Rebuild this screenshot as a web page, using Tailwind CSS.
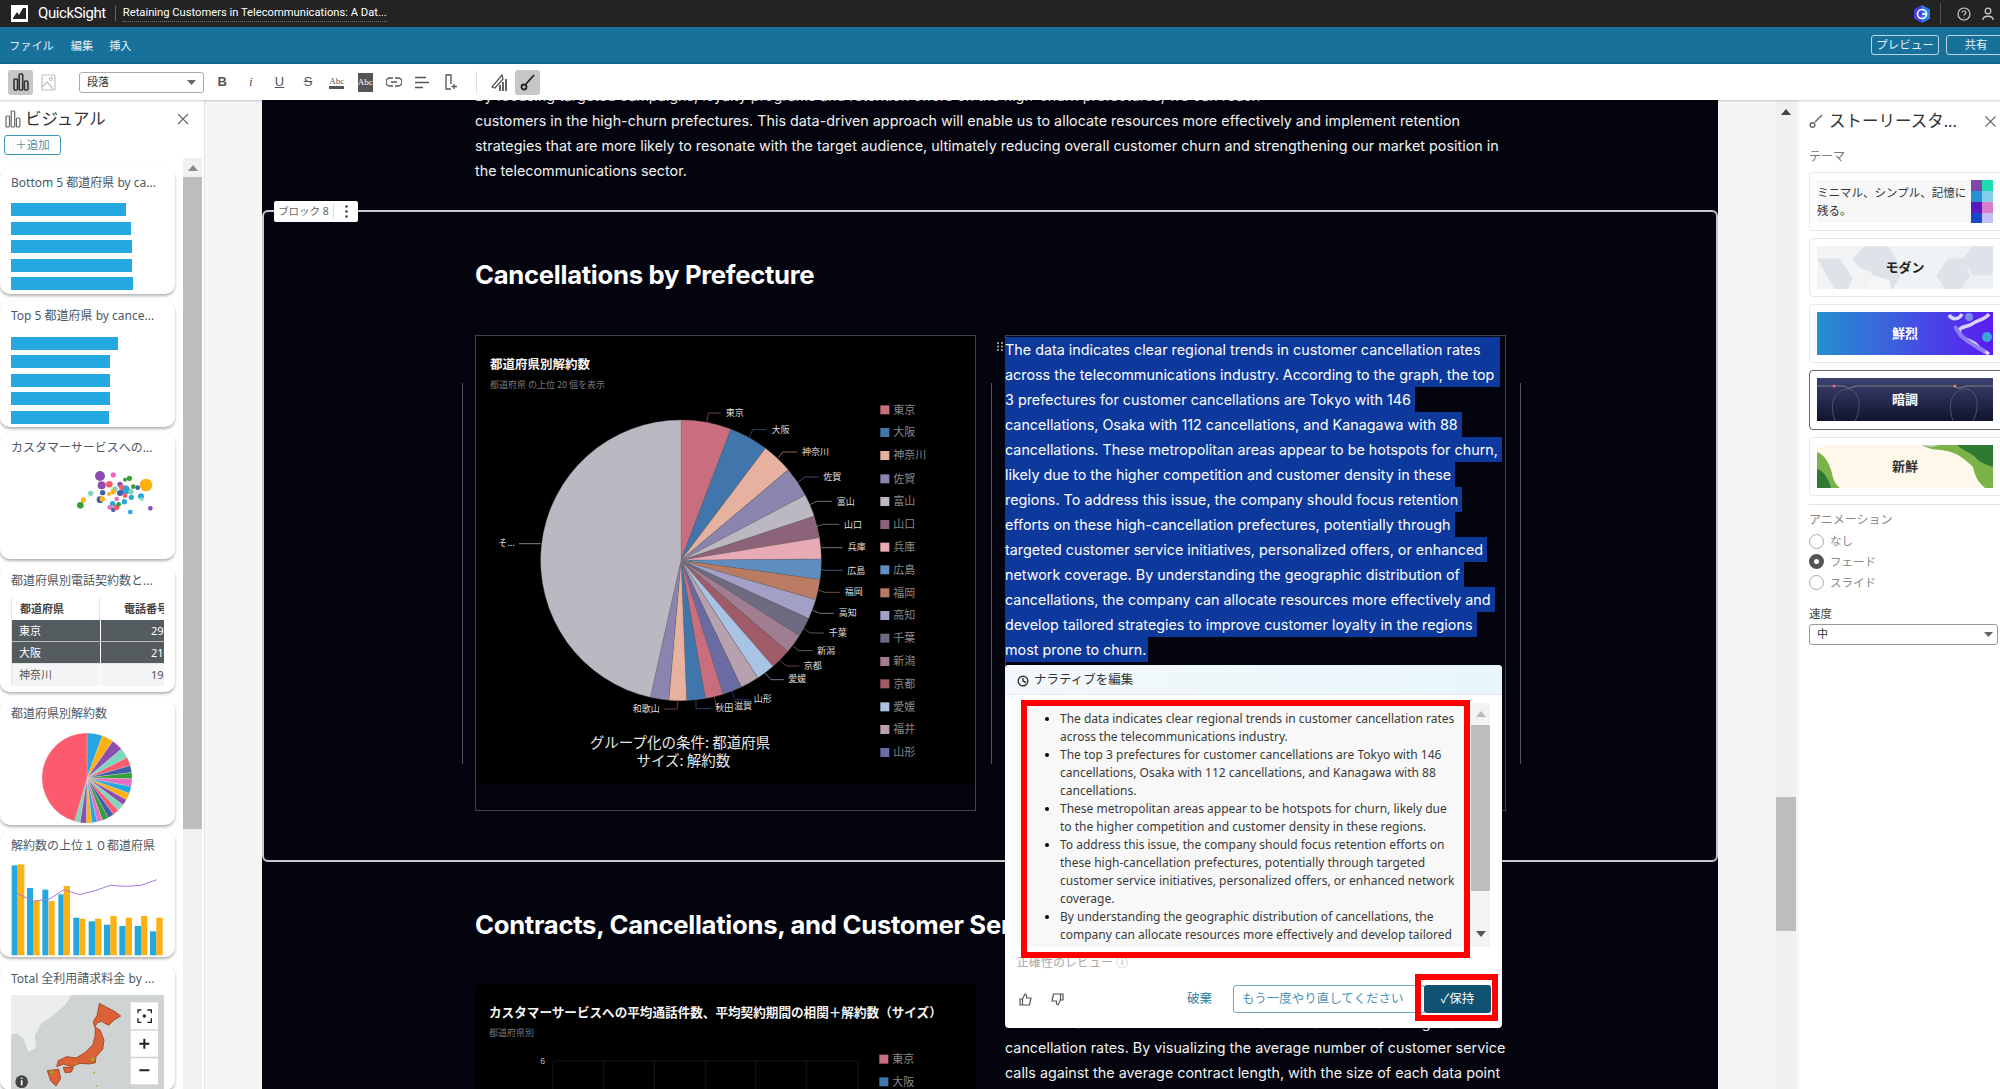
<!DOCTYPE html>
<html lang="ja">
<head>
  <meta charset="UTF-8" />
  <title>QuickSight</title>
  <script src="https://cdn.jsdelivr.net/npm/@tailwindcss/browser@4"></script>
</head>
<body class="m-0 font-['Noto_Sans','Noto_Sans_CJK_JP',sans-serif]">
<div class="w-[2000px] h-[1089px] overflow-hidden flex flex-col bg-[#f5f5f5]">

  <!-- top bar -->
  <header class="h-[27px] shrink-0 bg-[#232323] flex items-center text-white">
    <svg class="ml-[11px]" width="17" height="17" viewBox="0 0 17 17"><rect width="17" height="17" fill="#fff"/><path d="M2 13 L6 7 L8 10 L12 3 L15 3 L15 14 L2 14Z" fill="#232323"/></svg>
    <span class="ml-[10px] text-[15px] leading-none tracking-[-0.4px] font-['Roboto',sans-serif]">QuickSight</span>
    <span class="ml-[9px] w-px h-[15px] bg-[#666]"></span>
    <span class="ml-[7px] text-[11.2px] leading-[16px] border-b border-dotted border-[#777] font-['Roboto',sans-serif]">Retaining Customers in Telecommunications: A Dat...</span>
    <svg class="ml-auto" width="18" height="20" viewBox="0 0 18 20"><path d="M9 1 L17 5.5 V14.5 L9 19 L1 14.5 V5.5Z" fill="#4a3fe0"/><path d="M9 1 L17 5.5 V14.5 L9 19Z" fill="#2f7de8"/><circle cx="9" cy="10" r="4.5" fill="none" stroke="#fff" stroke-width="1.6"/><path d="M9 10 H13" stroke="#fff" stroke-width="1.6"/></svg>
    <span class="ml-[9px] w-px h-[21px] bg-[#555]"></span>
    <svg class="ml-[16px]" width="14" height="14" viewBox="0 0 14 14" fill="none" stroke="#c8c8c8" stroke-width="1.2"><circle cx="7" cy="7" r="6"/><path d="M5 5.5 C5 3.5 9 3.5 9 5.5 C9 7 7 7 7 8.5 M7 10 V10.8"/></svg>
    <svg class="ml-[10px] mr-[5px]" width="14" height="14" viewBox="0 0 14 14" fill="none" stroke="#c8c8c8" stroke-width="1.3"><circle cx="7" cy="4" r="2.8"/><path d="M2 13 C2 8 12 8 12 13"/></svg>
  </header>

  <!-- menu bar -->
  <nav class="h-[37px] shrink-0 bg-[#18719b] border-b-2 border-[#11648c] flex items-center text-white/90 text-[11.2px] pl-[9px] pt-[3px]">
    <span>ファイル</span>
    <span class="ml-[17px]">編集</span>
    <span class="ml-[16px]">挿入</span>
    <span class="ml-auto -mt-[2px] w-[68px] h-[20px] border border-white/70 rounded-[3px] flex items-center justify-center text-[11.5px]">プレビュー</span>
    <span class="ml-[7px] -mt-[2px] w-[60px] -mr-[6px] h-[20px] border border-white/70 rounded-[3px] flex items-center justify-center text-[11.5px]">共有</span>
  </nav>

  <!-- toolbar -->
  <div class="h-[36px] shrink-0 bg-white flex items-center pl-[8px] shadow-[0_1px_2px_rgba(0,0,0,0.2)] relative z-10 text-[#555]">
    <span class="w-[25px] h-[25px] rounded-[3px] bg-[#c6c6c6] flex items-center justify-center">
      <svg width="16" height="18" viewBox="0 0 16 18" fill="none" stroke="#333" stroke-width="1.6"><rect x="1" y="6" width="3.5" height="11" rx="1"/><rect x="6.2" y="1" width="3.5" height="16" rx="1"/><rect x="11.4" y="8" width="3.5" height="9" rx="1"/></svg>
    </span>
    <span class="w-[31px] flex justify-center">
      <svg width="15" height="17" viewBox="0 0 15 17" fill="none" stroke="#c0c0c0" stroke-width="1.2"><rect x="1" y="1" width="13" height="15" rx="1"/><circle cx="10" cy="5" r="1.5"/><path d="M1 13 L6 8 L12 15"/></svg>
    </span>
    <span class="ml-[15px] w-[125px] h-[21px] border border-[#aaa] rounded-[3px] flex items-center justify-between px-[7px] text-[11px] text-[#333]">段落<svg width="9" height="5" viewBox="0 0 9 5"><path d="M0 0 H9 L4.5 5Z" fill="#666"/></svg></span>
    <div class="ml-[4px] flex items-center">
      <span class="w-[28.6px] flex justify-center text-[13px] font-bold font-['Liberation_Sans',sans-serif]">B</span>
      <span class="w-[28.6px] flex justify-center text-[13px] italic font-['Liberation_Serif',serif]">i</span>
      <span class="w-[28.6px] flex justify-center text-[13px] underline font-['Liberation_Sans',sans-serif]">U</span>
      <span class="w-[28.6px] flex justify-center text-[13px] line-through font-['Liberation_Sans',sans-serif]">S</span>
      <span class="w-[28.6px] flex flex-col items-center text-[9px] leading-[10px] font-['Liberation_Serif',serif]">Abc<i class="block w-[15px] h-[3px] bg-[#555]"></i></span>
      <span class="w-[28.6px] flex justify-center"><i class="not-italic block w-[15px] h-[19px] bg-[#555] text-white text-[9px] leading-[19px] text-center font-['Liberation_Serif',serif]">Abc</i></span>
      <span class="w-[28.6px] flex justify-center">
        <svg width="16" height="10" viewBox="0 0 16 10" fill="none" stroke="#555" stroke-width="1.5"><path d="M7 1 H4 A4 4 0 0 0 4 9 H7 M9 1 H12 A4 4 0 0 1 12 9 H9 M5 5 H11"/></svg>
      </span>
      <span class="w-[28.6px] flex justify-center">
        <svg width="14" height="13" viewBox="0 0 14 13" stroke="#555" stroke-width="1.5"><path d="M0 1.5 H11 M0 6.5 H14 M0 11.5 H8"/></svg>
      </span>
      <span class="w-[28.6px] flex justify-center">
        <svg width="13" height="16" viewBox="0 0 13 16" fill="none" stroke="#555" stroke-width="1.3"><path d="M6 15 H1 V1 H6 V10 M9 10 V15 M6.5 12.5 H12"/></svg>
      </span>
    </div>
    <span class="ml-[11px] w-px h-[22px] bg-[#ddd]"></span>
    <span class="ml-[9px] w-[25px] flex justify-center">
      <svg width="16" height="17" viewBox="0 0 16 17" fill="none" stroke="#555" stroke-width="1.3"><path d="M1 13 L11 1 L12 5 L4 14Z"/><path d="M9 17 V11 M12 17 V8 M15 17 V5" stroke-width="1.8"/></svg>
    </span>
    <span class="ml-[4px] w-[25px] h-[25px] rounded-[3px] bg-[#c6c6c6] flex items-center justify-center">
      <svg width="15" height="17" viewBox="0 0 15 17" fill="none" stroke="#222" stroke-width="1.8"><path d="M14 1 L6 10"/><circle cx="4" cy="13" r="2.5"/></svg>
    </span>
  </div>

  <div class="flex flex-1 min-h-0">
    <!-- visuals panel -->
    <aside class="w-[205px] shrink-0 bg-white border-r border-[#e3e3e3] flex flex-col overflow-hidden">
      <div class="h-[35px] flex items-center pl-[5px] pr-[15px] pt-[3px]">
        <svg width="16" height="18" viewBox="0 0 16 18" fill="none" stroke="#666" stroke-width="1.2"><rect x="1" y="6" width="3.5" height="11" rx="1"/><rect x="6.2" y="1" width="3.5" height="16" rx="1"/><rect x="11.4" y="8" width="3.5" height="9" rx="1"/></svg>
        <span class="ml-[4px] text-[16.5px] text-[#333]">ビジュアル</span>
        <svg class="ml-auto" width="12" height="12" viewBox="0 0 12 12" stroke="#666" stroke-width="1.1"><path d="M1 1 L11 11 M11 1 L1 11"/></svg>
      </div>
      <div class="flex items-center pl-[4px] h-[20px]">
        <span class="w-[57px] h-[20px] border border-[#3e93b8] rounded-[3px] flex items-center justify-center text-[11.5px] text-[#5a8ea5]">＋追加</span>
      </div>
      <div class="flex flex-1 min-h-0 mt-[8px]">
        <div class="w-[175px] shrink-0 flex flex-col gap-[6.67px] pt-[5px]">

          <div class="h-[126px] shrink-0 rounded-[10px] bg-white shadow-[0_2px_3px_rgba(0,0,0,0.3)] px-[11px] pt-[7px] overflow-hidden">
            <div class="h-[16px] leading-[16px] text-[12px] text-[#4b5a66] whitespace-nowrap">Bottom 5 都道府県 by ca...</div>
            <div class="mt-[12px] flex flex-col gap-[5.5px]">
              <div class="h-[13px] w-[115px] bg-[#25a7df]"></div>
              <div class="h-[13px] w-[120px] bg-[#25a7df]"></div>
              <div class="h-[13px] w-[121px] bg-[#25a7df]"></div>
              <div class="h-[13px] w-[121px] bg-[#25a7df]"></div>
              <div class="h-[13px] w-[122px] bg-[#25a7df]"></div>
            </div>
          </div>

          <div class="h-[126px] shrink-0 rounded-[10px] bg-white shadow-[0_2px_3px_rgba(0,0,0,0.3)] px-[11px] pt-[7px] overflow-hidden">
            <div class="h-[16px] leading-[16px] text-[12px] text-[#4b5a66] whitespace-nowrap">Top 5 都道府県 by cance...</div>
            <div class="mt-[13px] flex flex-col gap-[5.5px]">
              <div class="h-[13px] w-[107px] bg-[#25a7df]"></div>
              <div class="h-[13px] w-[99px] bg-[#25a7df]"></div>
              <div class="h-[13px] w-[99px] bg-[#25a7df]"></div>
              <div class="h-[13px] w-[99px] bg-[#25a7df]"></div>
              <div class="h-[13px] w-[98px] bg-[#25a7df]"></div>
            </div>
          </div>

          <div class="relative h-[126px] shrink-0 rounded-[10px] bg-white shadow-[0_2px_3px_rgba(0,0,0,0.3)] px-[11px] pt-[7px] overflow-hidden">
            <div class="h-[16px] leading-[16px] text-[12px] text-[#4b5a66] whitespace-nowrap">カスタマーサービスへの...</div>
            <svg class="absolute left-0 top-0" width="175" height="126" viewBox="0 402 525 378">
              <g id="bubbles"></g>
            </svg>
          </div>

          <div class="h-[126px] shrink-0 rounded-[10px] bg-white shadow-[0_2px_3px_rgba(0,0,0,0.3)] pl-[11px] pt-[7px] overflow-hidden">
            <div class="h-[16px] leading-[16px] text-[12px] text-[#4b5a66] whitespace-nowrap">都道府県別電話契約数と...</div>
            <div class="mt-[9px] w-[153px] overflow-hidden text-[11px]">
              <div class="w-[190px] grid grid-cols-[88px_102px] border-l border-[#e5e5e5]">
                <div class="h-[22px] leading-[22px] pl-[8px] font-bold text-[#444] border-r border-[#e5e5e5]">都道府県</div>
                <div class="h-[22px] leading-[22px] pl-[24px] font-bold text-[#444]">電話番号数</div>
                <div class="h-[21px] leading-[21px] pl-[7px] bg-[#555c60] text-white">東京</div>
                <div class="h-[21px] leading-[21px] pl-[50px] ml-px bg-[#555c60] text-white">2910</div>
                <div class="col-span-2 h-px bg-[#bbb]"></div>
                <div class="h-[21px] leading-[21px] pl-[7px] bg-[#555c60] text-white">大阪</div>
                <div class="h-[21px] leading-[21px] pl-[50px] ml-px bg-[#555c60] text-white">2100</div>
                <div class="col-span-2 h-px bg-[#e5e5e5]"></div>
                <div class="h-[22px] leading-[22px] pl-[7px] bg-[#f3f5f6] text-[#555]">神奈川</div>
                <div class="h-[22px] leading-[22px] pl-[50px] ml-px bg-[#f3f5f6] text-[#555]">1930</div>
              </div>
            </div>
          </div>

          <div class="relative h-[126px] shrink-0 rounded-[10px] bg-white shadow-[0_2px_3px_rgba(0,0,0,0.3)] px-[11px] pt-[7px] overflow-hidden">
            <div class="h-[16px] leading-[16px] text-[12px] text-[#4b5a66] whitespace-nowrap">都道府県別解約数</div>
            <svg class="absolute left-0 top-0" width="175" height="126"><g id="miniPie"></g></svg>
          </div>

          <div class="relative h-[126px] shrink-0 rounded-[10px] bg-white shadow-[0_2px_3px_rgba(0,0,0,0.3)] px-[11px] pt-[7px] overflow-hidden">
            <div class="h-[16px] leading-[16px] text-[12px] text-[#4b5a66] whitespace-nowrap">解約数の上位１０都道府県</div>
            <svg class="absolute left-0 top-0" width="175" height="126" viewBox="0 422 525 378">
              <g fill="#25a7df">
                <rect x="35" y="525" width="18" height="270"/><rect x="81" y="593" width="18" height="202"/><rect x="127" y="598" width="18" height="197"/><rect x="175" y="612" width="16" height="183"/><rect x="220" y="682" width="18" height="113"/><rect x="266" y="693" width="19" height="102"/><rect x="312" y="703" width="19" height="92"/><rect x="358" y="707" width="19" height="88"/><rect x="404" y="707" width="19" height="88"/><rect x="450" y="723" width="19" height="72"/>
              </g>
              <g fill="#ffb114">
                <rect x="53" y="522" width="20" height="273"/><rect x="99" y="632" width="20" height="163"/><rect x="146" y="632" width="18" height="163"/><rect x="191" y="587" width="19" height="208"/><rect x="238" y="685" width="18" height="110"/><rect x="285" y="685" width="19" height="110"/><rect x="331" y="677" width="19" height="118"/><rect x="377" y="682" width="19" height="113"/><rect x="423" y="677" width="19" height="118"/><rect x="469" y="682" width="19" height="113"/>
              </g>
              <path d="M53 610 L100 632 L147 627 L192 598 L238 613 L285 601 L331 585 L377 588 L423 585 L470 568" fill="none" stroke="#a778d8" stroke-width="3"/>
            </svg>
          </div>

          <div class="h-[126px] shrink-0 rounded-[10px] bg-white shadow-[0_2px_3px_rgba(0,0,0,0.3)] px-[11px] pt-[7px] overflow-hidden">
            <div class="h-[16px] leading-[16px] text-[12px] text-[#4b5a66] whitespace-nowrap">Total 全利用請求料金 by ...</div>
            <svg class="mt-[8px] block" width="153" height="94" viewBox="33 915 459 282">
              <rect x="33" y="915" width="459" height="282" fill="#cfd3d3"/>
              <path d="M33 915 H215 L195 945 L160 975 L125 1000 L105 1035 L108 1075 L85 1085 L70 1045 L50 1030 L33 1035Z" fill="#eceded"/>
              <g fill="#db6236" stroke="#a34c2b" stroke-width="3" stroke-linejoin="round">
                <path d="M298 940 L320 952 L345 965 L362 978 L342 990 L326 1006 L305 994 L292 998 L284 1012 L280 995 L292 975Z"/>
                <path d="M286 1012 L300 1020 L312 1050 L308 1078 L288 1100 L286 1118 L268 1122 L240 1120 L215 1130 L190 1122 L170 1130 L175 1112 L200 1100 L228 1104 L255 1088 L278 1065 L285 1040Z"/>
                <path d="M142 1142 L176 1138 L182 1165 L168 1188 L152 1172Z"/>
                <path d="M190 1132 L220 1132 L214 1146 L195 1148Z"/>
              </g>
              <g fill="#8fae2c">
                <circle cx="278" cy="1108" r="6"/><circle cx="155" cy="1146" r="5"/><circle cx="228" cy="1122" r="3"/><circle cx="283" cy="1148" r="2.5"/><circle cx="290" cy="1188" r="2.5"/>
              </g>
              <g fill="#fff">
                <rect x="392" y="937" width="82" height="81"/><rect x="392" y="1022" width="82" height="78"/><rect x="392" y="1105" width="82" height="78"/>
              </g>
              <path d="M414 970 V960 H424 M442 960 H454 V970 M454 985 V997 H442 M424 997 H414 V985" fill="none" stroke="#222" stroke-width="4"/>
              <circle cx="433" cy="978" r="5" fill="#222"/>
              <path d="M418 1061 H448 M433 1046 V1076 M418 1141 H448" stroke="#222" stroke-width="6"/>
              <circle cx="65" cy="1175" r="19" fill="#444"/>
              <path d="M65 1171 V1186 M65 1163 V1167" stroke="#fff" stroke-width="5"/>
            </svg>
          </div>
        </div>
        <div class="ml-[8px] w-[19px] bg-[#f1f1f1] flex flex-col items-center -mt-[5px]">
          <svg class="mt-[7px]" width="10" height="6" viewBox="0 0 10 6"><path d="M0 6 H10 L5 0Z" fill="#888"/></svg>
          <div class="mt-[6px] w-[19px] h-[652px] bg-[#bdbdbd]"></div>
        </div>
      </div>
    </aside>

    <div class="w-[57px] shrink-0"></div>

    <!-- story canvas -->
    <main class="relative w-[1456px] shrink-0 bg-[#03040e] overflow-hidden text-white font-['Inter',sans-serif]">
      <div class="-mt-[17px] pl-[213px] text-[14.35px] leading-[25px] whitespace-nowrap text-[#f1f1f1]">
        <div>By focusing targeted campaigns, loyalty programs and retention offers on the high-churn prefectures, we can reach</div>
        <div>customers in the high-churn prefectures. This data-driven approach will enable us to allocate resources more effectively and implement retention</div>
        <div>strategies that are more likely to resonate with the target audience, ultimately reducing overall customer churn and strengthening our market position in</div>
        <div>the telecommunications sector.</div>
      </div>

      <section class="relative mt-[27px] h-[652px] border-2 border-[#c9c9c9] rounded-[6px]">
        <div class="absolute -top-[11px] left-[10px] h-[21px] w-[84px] bg-white rounded-[2px] flex items-center text-[10.5px] text-[#666] font-['Noto_Sans','Noto_Sans_CJK_JP',sans-serif]">
          <span class="w-[60px] text-center border-r border-[#ddd]">ブロック 8</span>
          <svg class="mx-auto" width="3" height="13" viewBox="0 0 3 13" fill="#444"><circle cx="1.5" cy="1.5" r="1.3"/><circle cx="1.5" cy="6.5" r="1.3"/><circle cx="1.5" cy="11.5" r="1.3"/></svg>
        </div>
        <h2 class="mt-[45px] pl-[211px] h-[36px] leading-[36px] text-[25.7px] font-bold tracking-[-0.3px] text-white">Cancellations by Prefecture</h2>
        <div class="mt-[42px] pl-[211px] flex gap-[29px]">
          <div class="w-[501px] h-[476px] border border-[#3f424d]">
            <svg width="499" height="448" viewBox="18 17 1497 1344" class="bg-black block font-['Noto_Sans_CJK_JP',sans-serif]">
              <text x="60" y="115" font-size="37.5" font-weight="700" fill="#f5f5f5">都道府県別解約数</text>
              <text x="60" y="172" font-size="27" fill="#777">都道府県 の上位 20 個を表示</text>
              <g id="bigPie"></g>
              <g id="leaders" fill="none" stroke-width="2.5"></g>
              <g id="labels" font-size="27" fill="#dedede"></g>
              <g id="legend" font-size="33" fill="#888"></g>
              <text x="630" y="1253" font-size="43.5" fill="#e8e8e8" text-anchor="middle">グループ化の条件: 都道府県</text>
              <text x="640" y="1306" font-size="43.5" fill="#e8e8e8" text-anchor="middle">サイズ: 解約数</text>
            </svg>
          </div>
          <div class="relative w-[501px] h-[476px] border border-[#3f424d] pt-px text-[14.35px] whitespace-nowrap leading-[25px]">
            <div class="-ml-px flex flex-col items-start">
              <span class="block bg-[#0d389c] pr-[19px]">The data indicates clear regional trends in customer cancellation rates</span>
              <span class="block bg-[#0d389c] pr-[6px]">across the telecommunications industry. According to the graph, the top</span>
              <span class="block bg-[#0d389c] pr-[4px]">3 prefectures for customer cancellations are Tokyo with 146</span>
              <span class="block bg-[#0d389c] pr-[4px]">cancellations, Osaka with 112 cancellations, and Kanagawa with 88</span>
              <span class="block bg-[#0d389c] pr-[4px]">cancellations. These metropolitan areas appear to be hotspots for churn,</span>
              <span class="block bg-[#0d389c] pr-[4px]">likely due to the higher competition and customer density in these</span>
              <span class="block bg-[#0d389c] pr-[4px]">regions. To address this issue, the company should focus retention</span>
              <span class="block bg-[#0d389c] pr-[4px]">efforts on these high-cancellation prefectures, potentially through</span>
              <span class="block bg-[#0d389c] pr-[4px]">targeted customer service initiatives, personalized offers, or enhanced</span>
              <span class="block bg-[#0d389c] pr-[4px]">network coverage. By understanding the geographic distribution of</span>
              <span class="block bg-[#0d389c] pr-[4px]">cancellations, the company can allocate resources more effectively and</span>
              <span class="block bg-[#0d389c] pr-[4px]">develop tailored strategies to improve customer loyalty in the regions</span>
              <span class="block bg-[#0d389c] pr-[2px]">most prone to churn.</span>
            </div>
          </div>
        </div>
        <!-- resize handles -->
        <div class="absolute left-[198px] top-[171px] w-px h-[381px] bg-[#555]"></div>
        <div class="absolute left-[727px] top-[171px] w-px h-[381px] bg-[#555]"></div>
        <div class="absolute left-[1256px] top-[171px] w-px h-[381px] bg-[#555]"></div>
        <svg class="absolute left-[733px] top-[130px]" width="6" height="9" viewBox="0 0 6 9" fill="#bbb"><circle cx="1" cy="1" r="1"/><circle cx="5" cy="1" r="1"/><circle cx="1" cy="4.5" r="1"/><circle cx="5" cy="4.5" r="1"/><circle cx="1" cy="8" r="1"/><circle cx="5" cy="8" r="1"/></svg>
      </section>

      <h2 class="mt-[45px] pl-[213px] h-[36px] leading-[36px] text-[25.7px] font-bold tracking-[-0.3px] text-white whitespace-nowrap">Contracts, Cancellations, and Customer Service Interactions</h2>
      <div class="mt-[42px] pl-[213px] flex gap-[29px]">
        <svg width="501" height="129" viewBox="18 75 1503 387" class="bg-black block shrink-0 font-['Noto_Sans_CJK_JP',sans-serif]">
          <text x="60" y="171" font-size="37.8" font-weight="700" fill="#f5f5f5">カスタマーサービスへの平均通話件数、平均契約期間の相関＋解約数（サイズ）</text>
          <text x="60" y="228" font-size="27" fill="#777">都道府県別</text>
          <text x="214" y="312" font-size="26" fill="#bbb" font-family="Liberation Sans">6</text>
          <path d="M252 303 H1167 V462 M252 303 V462 M403 303 V462 M556 303 V462 M709 303 V462 M860 303 V462 M1013 303 V462" fill="none" stroke="#222" stroke-width="2"/>
          <rect x="1231" y="284" width="27" height="27" fill="#c96e7e"/>
          <text x="1270" y="309" font-size="33" fill="#888">東京</text>
          <rect x="1231" y="352" width="27" height="27" fill="#4076ac"/>
          <text x="1270" y="377" font-size="33" fill="#888">大阪</text>
        </svg>
        <div class="w-[501px] text-[14.35px] leading-[25px] whitespace-nowrap text-[#f1f1f1] mt-[25px]">
          <div>The correlation between service interactions and contract length and</div>
          <div>cancellation rates. By visualizing the average number of customer service</div>
          <div>calls against the average contract length, with the size of each data point</div>
        </div>
      </div>

      <!-- narrative dialog -->
      <div class="absolute left-[743px] top-[565px] w-[497px] h-[363px] bg-white rounded-[4px] text-[#333] font-['Noto_Sans','Noto_Sans_CJK_JP',sans-serif]">
        <div class="h-[30px] pt-[2px] rounded-t-[4px] bg-gradient-to-r from-[#f3f8fa] to-[#e8f6fb] border-b border-[#e3e8ea] flex items-center pl-[12px] text-[12.5px]">
          <svg width="12" height="12" viewBox="0 0 12 12" fill="none" stroke="#333" stroke-width="1.4"><circle cx="6" cy="6" r="4.8"/><path d="M6 3 V6 L9 7.5"/></svg>
          <span class="ml-[5px]">ナラティブを編集</span>
        </div>
        <div class="ml-[12px] mt-[8px] w-[473px] h-[244px] bg-[#f8f8f8] flex overflow-hidden">
          <ul class="w-[454px] pl-[43px] pt-[7px] text-[12px] leading-[18px] list-disc whitespace-nowrap text-[#3a3a3a] marker:text-black">
            <li>The data indicates clear regional trends in customer cancellation rates<br>across the telecommunications industry.</li>
            <li>The top 3 prefectures for customer cancellations are Tokyo with 146<br>cancellations, Osaka with 112 cancellations, and Kanagawa with 88<br>cancellations.</li>
            <li>These metropolitan areas appear to be hotspots for churn, likely due<br>to the higher competition and customer density in these regions.</li>
            <li>To address this issue, the company should focus retention efforts on<br>these high-cancellation prefectures, potentially through targeted<br>customer service initiatives, personalized offers, or enhanced network<br>coverage.</li>
            <li>By understanding the geographic distribution of cancellations, the<br>company can allocate resources more effectively and develop tailored</li>
          </ul>
          <div class="w-[19px] bg-[#f3f3f3] flex flex-col items-center">
            <svg class="mt-[8px]" width="10" height="6" viewBox="0 0 10 6"><path d="M0 6 H10 L5 0Z" fill="#bbb"/></svg>
            <div class="mt-[8px] w-[19px] h-[166px] bg-[#bdbdbd]"></div>
            <svg class="mt-auto mb-[10px]" width="10" height="6" viewBox="0 0 10 6"><path d="M0 0 H10 L5 6Z" fill="#555"/></svg>
          </div>
        </div>
        <div class="ml-[12px] mt-[8px] h-[16px] leading-[16px] text-[12px] text-[#a9a9a9]">正確性のレビュー ⓘ</div>
        <div class="mt-[14px] flex items-center h-[28px] pl-[14px] whitespace-nowrap">
          <svg class="shrink-0" width="13" height="13" viewBox="0 0 13 13" fill="none" stroke="#555" stroke-width="1.2"><path d="M1 6 H3.5 V12 H1Z M3.5 6 L6 1 C7.5 1 7.8 2.5 7.5 5 H12 L10.5 12 H3.5"/></svg>
          <svg class="shrink-0 ml-[19px]" width="13" height="13" viewBox="0 0 13 13" fill="none" stroke="#555" stroke-width="1.2"><path d="M12 7 H9.5 V1 H12Z M9.5 7 L7 12 C5.5 12 5.2 10.5 5.5 8 H1 L2.5 1 H9.5"/></svg>
          <span class="ml-[123px] w-[25px] shrink-0 text-[12.5px] text-[#2a80a8]">破棄</span>
          <span class="ml-[21px] w-[192px] shrink-0 h-[28px] border border-[#6fa9c4] rounded-[3px] pl-[8px] leading-[26px] text-[12.5px] text-[#4a94b8]">もう一度やり直してください</span>
          <span class="-ml-px w-[67px] shrink-0 h-[28px] rounded-[3px] bg-[#0f5272] text-white text-[12.5px] flex items-center justify-center relative">✓保持</span>
        </div>
        <!-- red callouts -->
        <div class="absolute left-[16px] top-[35px] w-[449px] h-[258px] border-[6px] border-[#ff0000]"></div>
        <div class="absolute left-[410px] top-[309px] w-[83px] h-[47px] border-[6px] border-[#ff0000]"></div>
      </div>
    </main>

    <div class="w-[58px] shrink-0"></div>
    <div class="w-[20px] shrink-0 bg-[#f0f0f0] flex flex-col items-center">
      <svg class="mt-[9px]" width="10" height="6" viewBox="0 0 10 6"><path d="M0 6 H10 L5 0Z" fill="#444"/></svg>
      <div class="mt-[682px] w-[20px] h-[134px] bg-[#bdbdbd]"></div>
    </div>
    <div class="w-[3px] shrink-0"></div>

    <!-- story style panel -->
    <aside class="flex-1 bg-white pl-[10px] text-[#555] overflow-hidden">
      <div class="h-[40px] flex items-center pr-[4px] pt-[2px] whitespace-nowrap">
        <svg width="14" height="15" viewBox="0 0 14 15" fill="none" stroke="#666" stroke-width="1.5"><path d="M13 1 L6 8"/><circle cx="3.5" cy="11" r="2.3"/></svg>
        <span class="ml-[6px] text-[16.5px] text-[#333] leading-none">ストーリースタ...</span>
        <svg class="ml-auto" width="11" height="11" viewBox="0 0 11 11" stroke="#666" stroke-width="1.1"><path d="M0.5 0.5 L10.5 10.5 M10.5 0.5 L0.5 10.5"/></svg>
      </div>
      <div class="mt-[7px] h-[20px] leading-[20px] text-[12px] text-[#777]">テーマ</div>
      <div class="mt-[5px] flex flex-col gap-[7px] -mr-[8px]">
        <div class="h-[59px] border border-[#e9e9e9] rounded-[4px] p-[7px]">
          <div class="h-[43px] w-[176px] bg-[#f7f7f7] flex items-center justify-between">
            <span class="text-[11.5px] leading-[18px] text-[#333]">ミニマル、シンプル、記憶に<br>残る。</span>
            <div class="w-[22px] grid grid-cols-2 shrink-0">
              <i class="h-[11px] bg-[#7e4aa8]"></i><i class="h-[11px] bg-[#1ddcae]"></i>
              <i class="h-[11px] bg-[#2590d4]"></i><i class="h-[11px] bg-[#84cfee]"></i>
              <i class="h-[11px] bg-[#5b18c0]"></i><i class="h-[11px] bg-[#d97ccb]"></i>
              <i class="h-[10px] bg-[#1849c8]"></i><i class="h-[10px] bg-[#c3c0f8]"></i>
            </div>
          </div>
        </div>
        <div class="h-[59px] border border-[#e9e9e9] rounded-[4px] p-[7px]">
          <div class="relative h-[43px] w-[176px]">
            <svg width="176" height="43" viewBox="953 738 526 128"><defs><linearGradient id="mg" x1="0" x2="1"><stop offset="0" stop-color="#f2f4f6"/><stop offset="1" stop-color="#eef1f3"/></linearGradient></defs><rect x="953" y="738" width="526" height="128" fill="url(#mg)"/><g fill="#dde3e8"><path d="M953 775 H1020 L1060 835 L1045 866 H1005Z"/><path d="M1095 738 H1165 L1210 810 L1180 866 H1140 L1115 815 L1075 800 L1060 775Z"/><path d="M1095 866 L1120 825 L1170 840 L1175 866Z" fill="#f4f6f8"/><path d="M1310 825 L1345 775 L1390 775 L1410 825 L1385 866 H1335Z"/><path d="M1385 780 L1420 738 H1478 V825 H1420Z"/></g></svg>
            <div class="absolute inset-0 flex items-center justify-center text-[13px] font-bold text-[#222]">モダン</div>
          </div>
        </div>
        <div class="h-[59px] border border-[#e9e9e9] rounded-[4px] p-[7px]">
          <div class="relative h-[43px] w-[176px]">
            <svg width="176" height="43" viewBox="0 0 176 43"><defs><linearGradient id="vg" x1="0" x2="1"><stop offset="0" stop-color="#2591cf"/><stop offset="1" stop-color="#5a1cf2"/></linearGradient></defs><rect width="176" height="43" fill="url(#vg)"/><path d="M132 3 C135 8 142 8 145 2 M172 2 C168 8 160 8 155 12 C148 16 140 14 143 22 C146 30 156 26 162 36 L172 42" fill="none" stroke="#d9d2fb" stroke-width="3.5"/><circle cx="152" cy="5" r="4" fill="#7d89e8"/><circle cx="170" cy="25" r="5" fill="#3aa5da"/><path d="M138 14 C144 28 156 32 168 40" fill="none" stroke="#8e7cf3" stroke-width="4"/></svg>
            <div class="absolute inset-0 flex items-center justify-center text-[13px] font-bold text-white">鮮烈</div>
          </div>
        </div>
        <div class="h-[60px] border-[1.5px] border-[#666] rounded-[4px] p-[7px]">
          <div class="relative h-[43px] w-[176px]">
            <svg width="176" height="43" viewBox="0 0 176 43"><defs><linearGradient id="dg" x1="0" x2="0" y1="0" y2="1"><stop offset="0" stop-color="#3c416d"/><stop offset="1" stop-color="#11142f"/></linearGradient></defs><rect width="176" height="43" fill="url(#dg)"/><path d="M0 8 H26 C30 8 30 11 33 10 C36 9 38 8 42 8 H135 C138 8 140 11 143 10 C146 9 148 8 152 8 H176" fill="none" stroke="#8a7f8c" stroke-width="1"/><path d="M18 43 C10 20 22 11 30 11 C42 11 46 28 38 43 M136 43 C128 20 140 11 148 11 C160 11 164 28 156 43" fill="none" stroke="#5d5f72" stroke-width="0.8"/><circle cx="17" cy="8" r="1.5" fill="#d96a6a"/><circle cx="138" cy="8" r="1.5" fill="#d98a6a"/></svg>
            <div class="absolute inset-0 flex items-center justify-center text-[13px] font-bold text-white">暗調</div>
          </div>
        </div>
        <div class="h-[59px] border border-[#e9e9e9] rounded-[4px] p-[7px]">
          <div class="relative h-[43px] w-[176px]">
            <svg width="176" height="43" viewBox="0 0 176 43"><rect width="176" height="43" fill="#fdf8ea"/><path d="M0 7 C8 10 12 18 15 28 C16 35 19 40 23 43 H0Z" fill="#7cb24a"/><path d="M0 24 C8 26 12 36 14 43 H0Z" fill="#2f7a32"/><path d="M105 0 C115 6 122 4 130 6 C140 8 148 14 156 22 C158 32 162 38 168 43 H176 V0Z" fill="#7cb24a"/><path d="M105 0 C112 3 118 2 122 0Z" fill="#b9d2c4"/><path d="M140 0 C146 6 156 8 160 14 C164 18 170 20 176 22 V0Z" fill="#2f7a32"/></svg>
            <div class="absolute inset-0 flex items-center justify-center text-[13px] font-bold text-[#333]">新鮮</div>
          </div>
        </div>
      </div>
      <div class="mt-[8px] h-px bg-[#e3e3e3]"></div>
      <div class="mt-[7px] h-[16px] leading-[16px] text-[12px] text-[#888]">アニメーション</div>
      <div class="mt-[6px] flex flex-col gap-[6.5px] text-[11.5px] text-[#888]">
        <div class="h-[14px] flex items-center gap-[6px]"><i class="w-[15px] h-[15px] rounded-full border border-[#aaa]"></i>なし</div>
        <div class="h-[14px] flex items-center gap-[6px]"><i class="w-[15px] h-[15px] rounded-full border-[5px] border-[#555] bg-white"></i>フェード</div>
        <div class="h-[15px] flex items-center gap-[6px]"><i class="w-[15px] h-[15px] rounded-full border border-[#aaa]"></i>スライド</div>
      </div>
      <div class="mt-[16px] h-[16px] leading-[16px] text-[11.5px] text-[#444]">速度</div>
      <div class="mt-[2px] mr-[2px] h-[21px] border border-[#999] rounded-[3px] flex items-center justify-between pl-[7px] pr-[4px] text-[11px] text-[#333]">中<svg width="9" height="5" viewBox="0 0 9 5"><path d="M0 0 H9 L4.5 5Z" fill="#666"/></svg></div>
    </aside>
  </div>
</div>

<script>
  const NS = "http://www.w3.org/2000/svg";
  function add(parent, tag, attrs, text) {
    const el = document.createElementNS(NS, tag);
    for (const k in attrs) el.setAttribute(k, attrs[k]);
    if (text) el.textContent = text;
    parent.appendChild(el);
    return el;
  }

  // slices given as end angles, clockwise from 12 o'clock
  function pie(id, cx, cy, r, ends, colors, stroke, sw) {
    const g = document.getElementById(id);
    let start = 0;
    ends.forEach((end, i) => {
      const a0 = (start - 90) * Math.PI / 180, a1 = (end - 90) * Math.PI / 180;
      const large = end - start > 180 ? 1 : 0;
      const d = `M${cx} ${cy} L${cx + r * Math.cos(a0)} ${cy + r * Math.sin(a0)} A${r} ${r} 0 ${large} 1 ${cx + r * Math.cos(a1)} ${cy + r * Math.sin(a1)}Z`;
      add(g, "path", { d, fill: colors[i % colors.length], stroke, "stroke-width": sw });
      start = end;
    });
  }

  const bigColors = ["#c96e7e","#4076ac","#e6b29f","#8a84ae","#bcb8c2","#8c6379","#e8aab4","#5f8dc0","#bb7a62","#a3a0c5","#6e6a82","#a17d92","#9f5c68","#a9c3e4","#b8a1ae","#6b6ba3","#c96e7e","#4076ac","#e6b29f","#8a84ae","#bcb8c2"];
  pie("bigPie", 633, 690, 421, [20.8,37,49.8,62.3,71.7,80.7,89.5,97.9,106.3,114.5,122.5,130.5,139,146.8,154.5,162.6,170,177.7,185,192.6,360], bigColors, "#6f6f6f", 1);

  const miniColors = ["#25a7df","#ffb114","#8e4db0","#7fd6bc","#fb5b6c","#3f5fa8","#35a035","#ea6dc5"];
  pie("miniPie", 87, 79, 45, [20,35,50,63,74,83,91,101,110,119,127,136,144,152,160,167,174,181,189,196,360],
    [...miniColors, ...miniColors, "#25a7df","#ffb114","#8e4db0","#7fd6bc","#fb5b6c"], "#ddd", 0.3);

  const labels = [
    ["東京",767,246,"M710 274 L716 248 H752","#8c4a50"],
    ["大阪",905,298,"M838 322 L848 298 H890","#2f4e7a"],
    ["神奈川",996,364,"M925 383 L938 365 H982","#a57a68"],
    ["佐賀",1060,440,"M985 455 L1005 440 H1046","#4c5a88"],
    ["富山",1100,513,"M1020 523 L1040 513 H1086","#888888"],
    ["山口",1122,582,"M1040 588 L1060 582 H1108","#777777"],
    ["兵庫",1133,650,"M1054 652 H1118","#a08088"],
    ["広島",1132,720,"M1054 718 L1070 720 H1118","#4a6a95"],
    ["福岡",1124,784,"M1046 780 L1065 786 H1110","#8f5a45"],
    ["高知",1106,848,"M1028 840 L1050 849 H1092","#8a88a0"],
    ["千葉",1076,907,"M1002 895 L1020 908 H1062","#666666"],
    ["新潟",1041,961,"M970 947 L985 961 H1028","#777777"],
    ["京都",1001,1006,"M928 990 L950 1007 H988","#804a50"],
    ["愛媛",955,1046,"M885 1028 L903 1048 H942","#8090a8"],
    ["山形",851,1105,"M785 1082 L795 1107 H838","#2f3a80"],
    ["滋賀",792,1125,"M733 1098 L738 1125","#804a50"],
    ["秋田",736,1133,"M678 1108 V1135 H722","#2f4e7a"],
    ["和歌山",488,1136,"M622 1108 V1136 H582","#8c4a50"],
    ["そ...",85,638,"M147 640 H212","#999999"]
  ];
  const leaders = document.getElementById("leaders"), labelG = document.getElementById("labels");
  labels.forEach(([t, x, y, d, c]) => {
    add(leaders, "path", { d, stroke: c });
    add(labelG, "text", { x, y: y + 10 }, t);
  });

  const legendNames = ["東京","大阪","神奈川","佐賀","富山","山口","兵庫","広島","福岡","高知","千葉","新潟","京都","愛媛","福井","山形"];
  const legendY = [238,306,375,445,513,582,650,718,787,855,923,993,1060,1129,1197,1266];
  const legendG = document.getElementById("legend");
  legendNames.forEach((t, i) => {
    add(legendG, "rect", { x: 1231, y: legendY[i] - 13, width: 27, height: 27, fill: bigColors[i] });
    add(legendG, "text", { x: 1270, y: legendY[i] + 12 }, t);
  });

  const s = "#25a7df", o = "#ffb114", p = "#8e4db0", t = "#7fd6bc", r = "#fb5b6c", n = "#3f5fa8", g = "#35a035", k = "#ea6dc5";
  const bubbles = [[300,531,15,p],[340,528,8,k],[375,542,6,g],[388,538,8,g],[438,558,19,o],[305,559,12,p],[328,556,10,r],[360,556,8,p],[400,563,7,g],[413,566,7,n],[272,583,8,t],[308,581,8,n],[345,570,8,t],[340,578,8,o],[376,573,14,s],[393,578,8,t],[365,565,8,r],[360,582,9,n],[250,603,8,o],[241,619,10,g],[300,602,10,n],[307,600,8,o],[327,585,6,o],[375,590,7,r],[394,595,8,s],[423,592,9,s],[425,600,6,t],[350,600,7,k],[373,608,8,s],[338,614,8,s],[329,625,7,k],[340,632,7,n],[349,625,9,r],[356,616,7,g],[391,639,7,s],[451,628,7,p]];
  const bubbleG = document.getElementById("bubbles");
  bubbles.forEach(([cx, cy, rad, fill]) => add(bubbleG, "circle", { cx, cy, r: rad, fill }));
</script>
</body>
</html>
